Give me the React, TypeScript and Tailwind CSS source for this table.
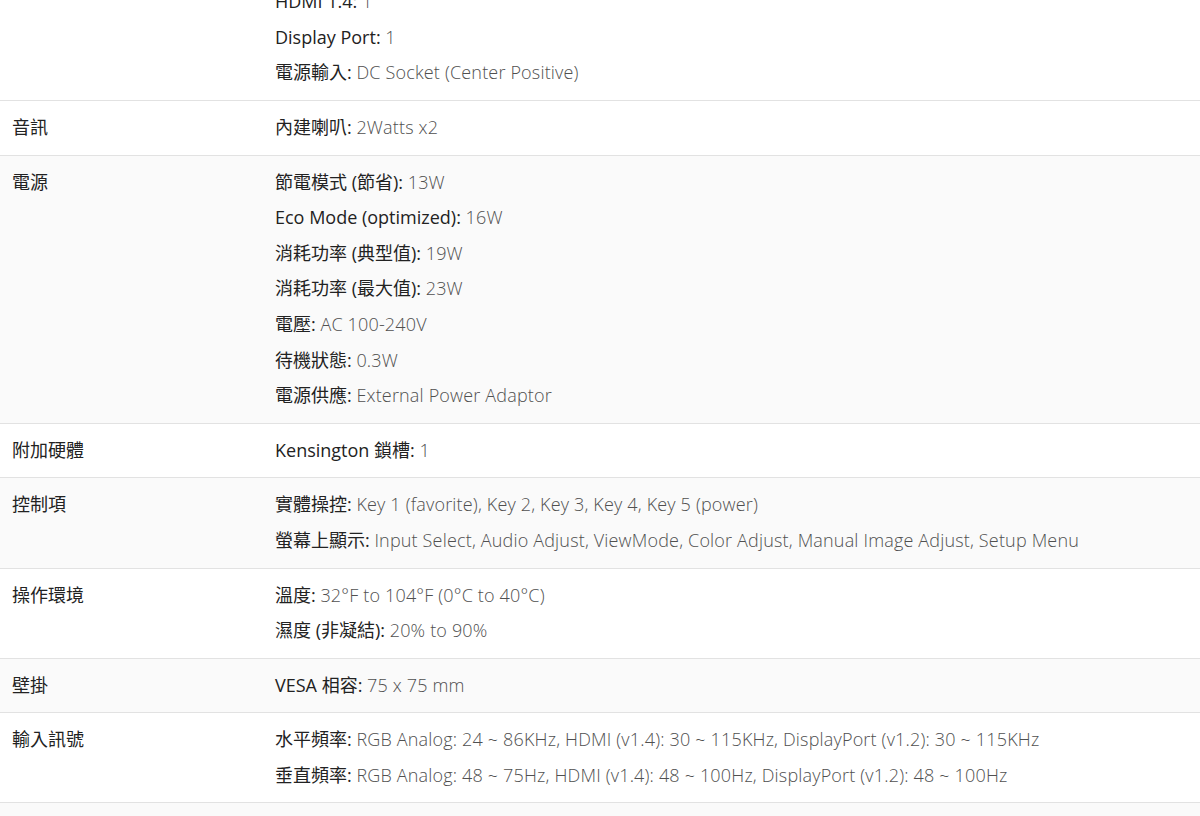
type Spec = { label: string; lines: [string, string][]; shaded?: boolean }

const specs: Spec[] = [
  {
    label: '輸入/輸出',
    lines: [
      ['3.5mm 音訊輸出', '1'],
      ['VGA', '1'],
      ['HDMI 1.4', '1'],
      ['Display Port', '1'],
      ['電源輸入', 'DC Socket (Center Positive)'],
    ],
  },
  { label: '音訊', lines: [['內建喇叭', '2Watts x2']] },
  {
    label: '電源',
    shaded: true,
    lines: [
      ['節電模式 (節省)', '13W'],
      ['Eco Mode (optimized)', '16W'],
      ['消耗功率 (典型值)', '19W'],
      ['消耗功率 (最大值)', '23W'],
      ['電壓', 'AC 100-240V'],
      ['待機狀態', '0.3W'],
      ['電源供應', 'External Power Adaptor'],
    ],
  },
  { label: '附加硬體', lines: [['Kensington 鎖槽', '1']] },
  {
    label: '控制項',
    shaded: true,
    lines: [
      ['實體操控', 'Key 1 (favorite), Key 2, Key 3, Key 4, Key 5 (power)'],
      ['螢幕上顯示', 'Input Select, Audio Adjust, ViewMode, Color Adjust, Manual Image Adjust, Setup Menu'],
    ],
  },
  {
    label: '操作環境',
    lines: [
      ['溫度', '32°F to 104°F (0°C to 40°C)'],
      ['濕度 (非凝結)', '20% to 90%'],
    ],
  },
  { label: '壁掛', shaded: true, lines: [['VESA 相容', '75 x 75 mm']] },
  {
    label: '輸入訊號',
    lines: [
      ['水平頻率', 'RGB Analog: 24 ~ 86KHz, HDMI (v1.4): 30 ~ 115KHz, DisplayPort (v1.2): 30 ~ 115KHz'],
      ['垂直頻率', 'RGB Analog: 48 ~ 75Hz, HDMI (v1.4): 48 ~ 100Hz, DisplayPort (v1.2): 48 ~ 100Hz'],
    ],
  },
  { label: '人體工學', shaded: true, lines: [['傾斜', '-5° / 20°']] },
]

export default function App() {
  return (
    <div className="w-[1200px] h-[816px] overflow-hidden bg-white font-['Open_Sans','Noto_Sans_CJK_TC',sans-serif] text-[18px]">
      {/* the first row is scrolled partly out of view */}
      <div className="-mt-[96px]">
        {specs.map(spec => (
          <div key={spec.label} className={`flex border-b border-[#e2e2e2] py-[9px] ${spec.shaded ? 'bg-[#fafafa]' : 'bg-white'}`}>
            <div className="w-[263px] shrink-0 pl-[12px] leading-[35.6px] text-[#222]">{spec.label}</div>
            <div className="pl-[12px]">
              {spec.lines.map(([key, value]) => (
                <div key={key} className="leading-[35.6px] whitespace-nowrap">
                  <span className="text-[#222]">{key}: </span>
                  <span className="text-[#505050] font-light tracking-[0.17px]">{value}</span>
                </div>
              ))}
            </div>
          </div>
        ))}
      </div>
    </div>
  )
}
